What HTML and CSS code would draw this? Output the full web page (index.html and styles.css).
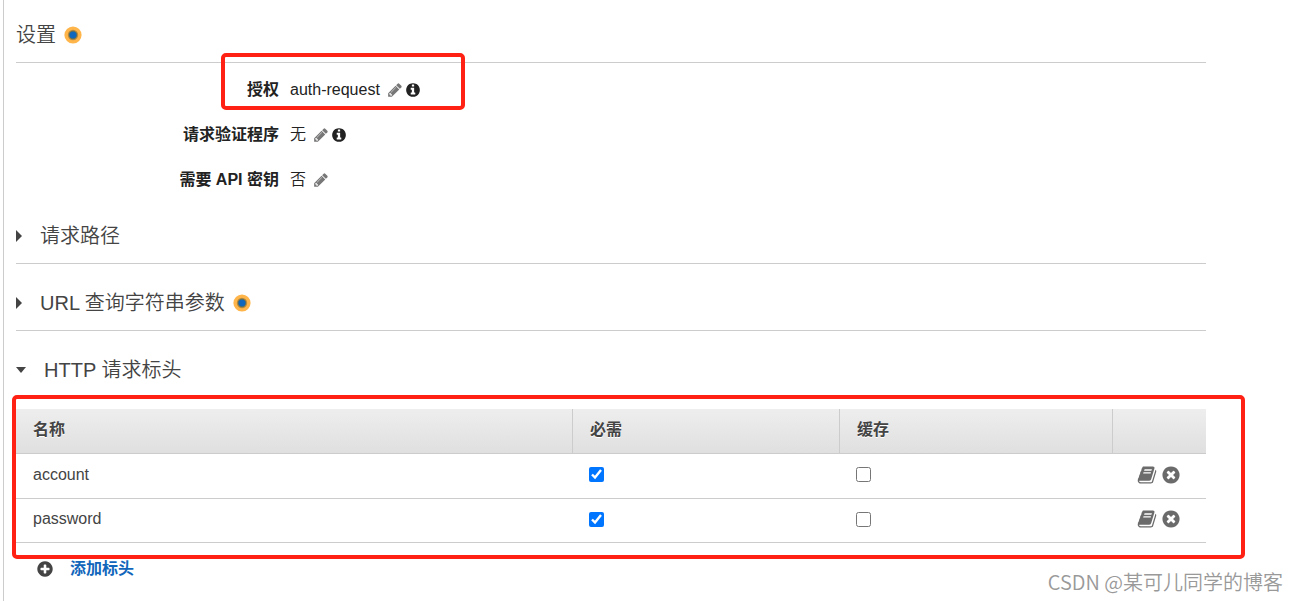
FILE: index.html
```html
<!DOCTYPE html>
<html lang="zh-CN">
<head>
<meta charset="utf-8">
<title>设置</title>
<link rel="stylesheet" href="styles.css">
</head>
<body>
<svg class="sprite" aria-hidden="true">
  <symbol id="pencil" viewBox="0 0 1792 1792"><path d="M491 1536l91-91-235-235-91 91v107h128v128h107zm523-928q0-22-22-22-10 0-17 7l-542 542q-7 7-7 17 0 22 22 22 10 0 17-7l542-542q7-7 7-17zm-54-192l416 416-832 832h-416v-416zm683 96q0 53-37 90l-166 166-416-416 166-165q36-38 90-38 53 0 91 38l235 234q37 39 37 91z"/></symbol>
  <symbol id="info" viewBox="0 0 1792 1792"><path d="M1152 1376v-160q0-14-9-23t-23-9h-96v-512q0-14-9-23t-23-9h-320q-14 0-23 9t-9 23v160q0 14 9 23t23 9h96v320h-96q-14 0-23 9t-9 23v160q0 14 9 23t23 9h448q14 0 23-9t9-23zm-128-896v-160q0-14-9-23t-23-9h-192q-14 0-23 9t-9 23v160q0 14 9 23t23 9h192q14 0 23-9t9-23zm640 416q0 209-103 385.5t-279.5 279.5-385.5 103-385.5-103-279.5-279.5-103-385.5 103-385.5 279.5-279.5 385.5-103 385.5 103 279.5 279.5 103 385.5z"/></symbol>
  <symbol id="remove" viewBox="0 0 1792 1792"><path d="M1277 1122q0-26-19-45l-181-181 181-181q19-19 19-45 0-27-19-46l-90-90q-19-19-46-19-26 0-45 19l-181 181-181-181q-19-19-45-19-27 0-46 19l-90 90q-19 19-19 46 0 26 19 45l181 181-181 181q-19 19-19 45 0 27 19 46l90 90q19 19 46 19 26 0 45-19l181-181 181 181q19 19 45 19 27 0 46-19l90-90q19-19 19-46zm387-226q0 209-103 385.5t-279.5 279.5-385.5 103-385.5-103-279.5-279.5-103-385.5 103-385.5 279.5-279.5 385.5-103 385.5 103 279.5 279.5 103 385.5z"/></symbol>
  <symbol id="plus" viewBox="0 0 1792 1792"><path d="M1344 960v-128q0-26-19-45t-45-19h-256v-256q0-26-19-45t-45-19h-128q-26 0-45 19t-19 45v256h-256q-26 0-45 19t-19 45v128q0 26 19 45t45 19h256v256q0 26 19 45t45 19h128q26 0 45-19t19-45v-256h256q26 0 45-19t19-45zm320-64q0 209-103 385.5t-279.5 279.5-385.5 103-385.5-103-279.5-279.5-103-385.5 103-385.5 279.5-279.5 385.5-103 385.5 103 279.5 279.5 103 385.5z"/></symbol>
  <symbol id="book" viewBox="0 0 1792 1792"><path d="M1703 478q40 57 18 129l-275 906q-19 64-76.500 107.500t-122.500 43.500h-923q-77 0-148.500-53.500t-99.500-131.500q-24-67-2-127 0-4 3-27t4-37q1-8-3-21.500t-3-19.500q2-11 8-21t16.500-23.500 16.500-23.500q23-38 45-91.500t30-91.500q3-10 .5-30t-.5-28q3-11 17-28t17-23q21-36 42-92t25-90q1-9-2.500-32t.5-28q4-13 22-30.500t22-22.500q19-26 42.500-84.500t27.500-96.500q1-8-3-25.500t-2-26.500q2-8 9-18t18-23 17-21q8-12 16.500-30.500t15-35 16-36 19.500-32 26.500-23.500 36-11.500 47.500 5.500l-1 3q38-9 51-9h761q74 0 114 56t18 130l-274 906q-36 119-71.500 153.500t-128.500 34.500h-869q-27 0-38 15-11 16-1 43 24 70 144 70h923q29 0 56-15.500t35-41.500l300-987q7-22 5-57 38 15 59 43zm-1064 2q-4 13 2 22.500t20 9.500h608q13 0 25.500-9.500t16.500-22.500l21-64q4-13-2-22.500t-20-9.500h-608q-13 0-25.500 9.500t-16.500 22.500zm-83 256q-4 13 2 22.500t20 9.500h608q13 0 25.500-9.500t16.500-22.500l21-64q4-13-2-22.500t-20-9.500h-608q-13 0-25.500 9.500t-16.500 22.500z"/></symbol>
  <symbol id="dot" viewBox="0 0 18 18"><circle cx="9" cy="9" r="8.600" fill="#ffb549"/><circle cx="9" cy="9" r="5.200" fill="#b98b3c"/><circle cx="9" cy="9" r="4.200" fill="#5c7060"/><circle cx="9" cy="9" r="3.300" fill="#0f66bd"/></symbol>
</svg>

<main class="panel">
  <h2 class="heading">设置 <svg class="dot"><use href="#dot"/></svg></h2>

  <dl class="settings">
    <div class="setting">
      <dt>授权</dt>
      <dd>auth-request
        <span class="tools"><button class="icon-button" aria-label="编辑授权"><svg class="icon muted"><use href="#pencil"/></svg></button><button class="icon-button" aria-label="授权信息"><svg class="icon"><use href="#info"/></svg></button></span>
      </dd>
    </div>
    <div class="setting">
      <dt>请求验证程序</dt>
      <dd>无
        <span class="tools"><button class="icon-button" aria-label="编辑请求验证程序"><svg class="icon muted"><use href="#pencil"/></svg></button><button class="icon-button" aria-label="请求验证程序信息"><svg class="icon"><use href="#info"/></svg></button></span>
      </dd>
    </div>
    <div class="setting">
      <dt>需要 API 密钥</dt>
      <dd>否
        <span class="tools"><button class="icon-button" aria-label="编辑 API 密钥"><svg class="icon muted"><use href="#pencil"/></svg></button></span>
      </dd>
    </div>
  </dl>

  <h2 class="heading"><button class="toggle" aria-expanded="false"><span class="caret"></span>请求路径</button></h2>
  <h2 class="heading"><button class="toggle" aria-expanded="false"><span class="caret"></span>URL 查询字符串参数</button> <svg class="dot"><use href="#dot"/></svg></h2>
  <h2 class="heading open"><button class="toggle" aria-expanded="true"><span class="caret down"></span>HTTP 请求标头</button></h2>

  <table class="headers">
    <colgroup><col class="col-name"><col class="col-required"><col class="col-cache"><col class="col-actions"></colgroup>
    <thead>
      <tr><th>名称</th><th>必需</th><th>缓存</th><th></th></tr>
    </thead>
    <tbody>
      <tr>
        <td>account</td>
        <td><input type="checkbox" class="check" aria-label="account 必需" checked></td>
        <td><input type="checkbox" class="check" aria-label="account 缓存"></td>
        <td><div class="actions"><button class="icon-button" aria-label="account 文档"><svg class="icon large"><use href="#book"/></svg></button><button class="icon-button" aria-label="删除 account"><svg class="icon large"><use href="#remove"/></svg></button></div></td>
      </tr>
      <tr>
        <td>password</td>
        <td><input type="checkbox" class="check" aria-label="password 必需" checked></td>
        <td><input type="checkbox" class="check" aria-label="password 缓存"></td>
        <td><div class="actions"><button class="icon-button" aria-label="password 文档"><svg class="icon large"><use href="#book"/></svg></button><button class="icon-button" aria-label="删除 password"><svg class="icon large"><use href="#remove"/></svg></button></div></td>
      </tr>
    </tbody>
  </table>

  <a class="add" href="#"><svg class="icon medium"><use href="#plus"/></svg>添加标头</a>
</main>

<div class="mark mark-auth"></div>
<div class="mark mark-table"></div>
<div class="watermark">CSDN @某可儿同学的博客</div>
</body>
</html>
```

FILE: styles.css
```css
* {
  box-sizing: border-box;
}

body {
  margin: 0;
  position: relative;
  background: #fff;
  color: #444;
  font: 16px/24px "Liberation Sans", "Noto Sans CJK SC", sans-serif;
}

.sprite {
  position: absolute;
  width: 0;
  height: 0;
}

.panel {
  min-height: 100vh;
  margin-left: 3px;
  padding: 21px 92px 0 12px;
  border-left: 1px solid #ccc;
}

.heading {
  display: flex;
  align-items: center;
  gap: 8px;
  margin: 0 0 25px;
  padding-bottom: 13px;
  border-bottom: 1px solid #ccc;
  font-size: 20px;
  line-height: 28px;
  font-weight: 350;
}

.heading.open {
  margin-bottom: 12px;
  border-bottom: 0;
}

.dot {
  width: 18px;
  height: 18px;
}

.toggle {
  display: flex;
  align-items: center;
  gap: 18px;
  padding: 0;
  border: 0;
  background: none;
  color: inherit;
  font: inherit;
  cursor: pointer;
}

.caret {
  border-style: solid;
  border-width: 6px 0 6px 6px;
  border-color: transparent transparent transparent #444;
}

.caret.down {
  border-width: 6px 5px 0;
  border-color: #444 transparent transparent;
}

.settings {
  margin: -21px 0 20px;
  color: #222;
}

.setting {
  display: grid;
  grid-template-columns: 263px 1fr;
  column-gap: 11px;
  align-items: center;
  min-height: 45px;
}

.setting dt {
  text-align: right;
  font-weight: 700;
}

.setting dd {
  display: flex;
  align-items: center;
  gap: 7px;
  margin: 0;
  font-weight: 350;
}

.tools {
  display: flex;
  gap: 2px;
}

.icon-button {
  display: flex;
  padding: 0;
  border: 0;
  background: none;
  color: inherit;
  cursor: pointer;
}

.icon {
  width: 16px;
  height: 16px;
  fill: currentColor;
}

.icon.muted {
  color: #777;
}

.icon.medium {
  width: 18px;
  height: 18px;
  color: #444;
}

.icon.large {
  width: 20px;
  height: 20px;
  color: #6b6b6b;
}

.headers {
  width: 100%;
  table-layout: fixed;
  border-spacing: 0;
}

.col-required {
  width: 267px;
}

.col-cache {
  width: 273px;
}

.col-actions {
  width: 94px;
}

.headers th,
.headers td {
  height: 45px;
  padding: 0 17px;
  border-bottom: 1px solid #ccc;
  text-align: left;
}

.headers th {
  padding-bottom: 3px;
  border-left: 1px solid #ccc;
  text-shadow: 0 1px 0 #fff;
}

.headers th:first-child {
  border-left: 0;
}

.headers thead {
  background: linear-gradient(#eee, #dfdfdf);
}

.headers td {
  padding-bottom: 3px;
}

.headers tr:last-child td {
  height: 44px;
}

.check {
  display: block;
  width: 15px;
  height: 15px;
  margin: 0;
  accent-color: #0075ff;
}

.actions {
  display: flex;
  justify-content: flex-end;
  gap: 4px;
  padding-right: 8px;
}

.add {
  display: inline-flex;
  align-items: center;
  gap: 16px;
  margin: 14px 0 0 20px;
  color: #1166bb;
  font-weight: 700;
  text-decoration: none;
}

.mark {
  position: absolute;
  border: 4px solid #ff2113;
  border-radius: 5px;
  pointer-events: none;
}

.mark-auth {
  top: 53px;
  left: 221px;
  width: 244px;
  height: 57px;
}

.mark-table {
  top: 395px;
  left: 12px;
  right: 53px;
  height: 164px;
}

.watermark {
  position: absolute;
  right: 15px;
  bottom: 5px;
  color: #999;
  font: 350 20px/28px "Noto Sans CJK SC", sans-serif;
}
```
